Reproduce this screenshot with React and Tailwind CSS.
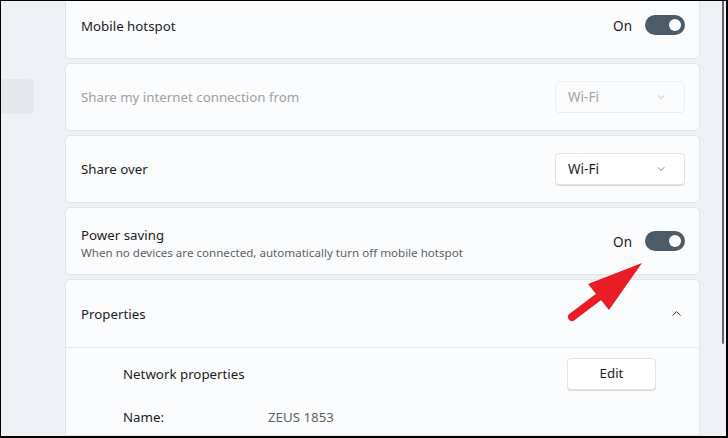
import { ChevronDown, ChevronUp } from 'lucide-react';

const Toggle = () => (
  <div className="flex items-center gap-[13px]">
    <span className="text-[13.5px] text-[#1b1b1b] pt-[2px]">On</span>
    <div className="w-[40px] h-[20px] rounded-full bg-[#4b5b67] flex items-center justify-end pr-[4px]">
      <div className="w-[12px] h-[12px] rounded-full bg-white" />
    </div>
  </div>
);

const Select = ({ disabled }) => (
  <div
    className={`w-[130px] h-[32px] rounded-[4px] border flex items-center justify-between pl-[12px] pr-[17px] text-[13.5px] ${
      disabled ? 'border-[#ebedef] bg-[#fafbfc] text-[#a3a3a3]' : 'border-[#e2e4e6] bg-white text-[#1b1b1b] shadow-[0_1px_0_#d9dbdd]'
    }`}
  >
    <span className="pt-[1px]">Wi-Fi</span>
    <ChevronDown className={`h-[12px] w-[12px] ${disabled ? 'text-[#b0b0b0]' : 'text-[#5a5a5a]'}`} strokeWidth={1.5} />
  </div>
);

const Card = ({ children, className = '' }) => (
  <div className={`rounded-[5px] border border-[#e3e6e9] bg-[#fbfcfd] ${className}`}>{children}</div>
);

export default function App() {
  return (
    <div
      className="relative w-[728px] h-[438px] overflow-hidden border-t border-l border-r-2 border-b-2 border-black bg-[#eef2f6] flex text-[#1b1b1b]"
      style={{ fontFamily: '"Noto Sans", "Open Sans", sans-serif' }}
    >
      {/* Sidebar */}
      <div className="w-[64px] shrink-0 pt-[78px]">
        <div className="w-[33px] h-[35px] rounded-r-[5px] bg-[#e5e9ed]" />
      </div>

      {/* Cards */}
      <div className="w-[635px] shrink-0 flex flex-col gap-[4px] -mt-[10px]">
        <Card className="h-[68px] shrink-0 flex items-center justify-between pl-[15px] pr-[14px]">
          <span className="text-[13.3px] pt-[3px]">Mobile hotspot</span>
          <Toggle />
        </Card>

        <Card className="h-[68px] shrink-0 flex items-center justify-between pl-[15px] pr-[14px]">
          <span className="text-[13.3px] pt-[2px] text-[#a0a0a0]">Share my internet connection from</span>
          <Select disabled />
        </Card>

        <Card className="h-[68px] shrink-0 flex items-center justify-between pl-[15px] pr-[14px]">
          <span className="text-[13.3px] pt-[2px]">Share over</span>
          <Select />
        </Card>

        <Card className="h-[68px] shrink-0 flex items-center justify-between pl-[15px] pr-[14px]">
          <div className="flex flex-col pt-[4px]">
            <span className="text-[13.3px] leading-[18px]">Power saving</span>
            <span className="text-[11.6px] leading-[17px] text-[#5f5f5f]">
              When no devices are connected, automatically turn off mobile hotspot
            </span>
          </div>
          <Toggle />
        </Card>

        <Card className="flex-1 rounded-b-none">
          <div className="h-[68px] flex items-center justify-between pl-[15px] pr-[15px] border-b border-[#e6e8ea]">
            <span className="text-[13.3px] pt-[2px]">Properties</span>
            <ChevronUp className="h-[15px] w-[15px] text-[#2a2a2a]" strokeWidth={1.5} />
          </div>
          <div className="pl-[57px] pr-[43px] pt-[10px]">
            <div className="flex items-center justify-between">
              <span className="text-[13.3px] pt-[2px]">Network properties</span>
              <div className="w-[89px] h-[32px] rounded-[4px] border border-[#e2e4e6] bg-white shadow-[0_1px_0_#d9dbdd] flex items-center justify-center text-[13.3px]">
                Edit
              </div>
            </div>
            <div className="flex items-center mt-[18px] text-[13.3px]">
              <span className="w-[145px]">Name:</span>
              <span className="text-[#5f5f5f]">ZEUS 1853</span>
            </div>
          </div>
        </Card>
      </div>

      {/* Scrollbar area */}
      <div className="flex-1 flex justify-end pr-[2px]">
        <div className="w-[2px] h-[343px] rounded-b-full bg-[#5f6469]" />
      </div>

      {/* Red annotation arrow */}
      <svg className="absolute left-0 top-0 pointer-events-none" width="728" height="438">
        <line x1="571" y1="316" x2="612" y2="285" stroke="#e91d25" strokeWidth="8" strokeLinecap="round" />
        <polygon points="641,262 587,283 608,309" fill="#e91d25" />
      </svg>
    </div>
  );
}
